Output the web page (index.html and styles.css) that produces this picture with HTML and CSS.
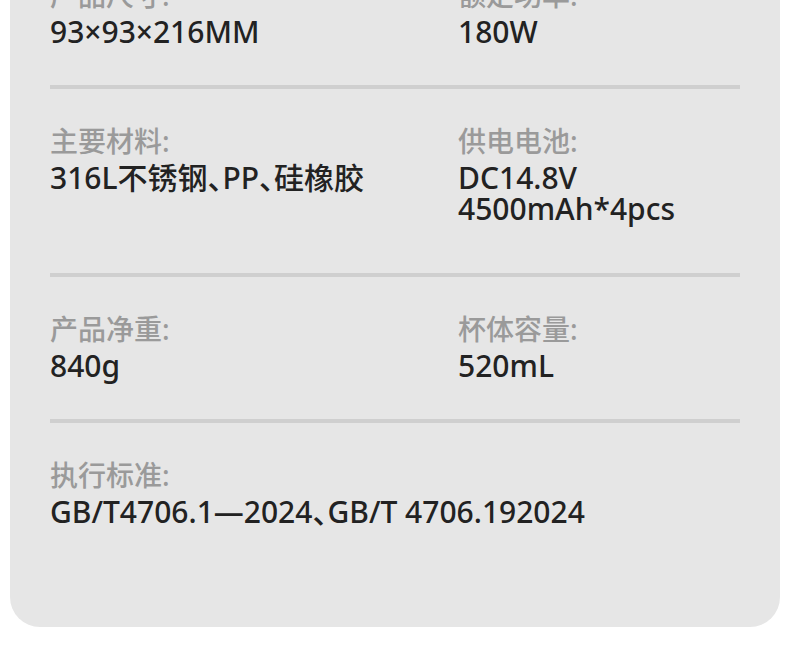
FILE: index.html
```html
<!DOCTYPE html>
<html lang="zh-CN">
<head>
<meta charset="utf-8">
<title>产品参数</title>
<link rel="stylesheet" href="styles.css">
</head>
<body>
<div class="card">
  <div class="row">
    <div class="cell">
      <div class="label">产品尺寸:</div>
      <div class="value">93×93×216MM</div>
    </div>
    <div class="cell">
      <div class="label">额定功率:</div>
      <div class="value">180W</div>
    </div>
  </div>
  <div class="row row-tall">
    <div class="cell">
      <div class="label">主要材料:</div>
      <div class="value">316L不锈钢<span class="pun">、</span>PP<span class="pun">、</span>硅橡胶</div>
    </div>
    <div class="cell">
      <div class="label">供电电池:</div>
      <div class="value">DC14.8V<br>4500mAh*4pcs</div>
    </div>
  </div>
  <div class="row">
    <div class="cell">
      <div class="label">产品净重:</div>
      <div class="value">840g</div>
    </div>
    <div class="cell">
      <div class="label">杯体容量:</div>
      <div class="value">520mL</div>
    </div>
  </div>
  <div class="row row-last">
    <div class="cell cell-wide">
      <div class="label">执行标准:</div>
      <div class="value">GB/T4706.1—2024<span class="pun">、</span>GB/T 4706.192024</div>
    </div>
  </div>
</div>
</body>
</html>
```

FILE: styles.css
```css
html, body {
  margin: 0;
  padding: 0;
  background: #ffffff;
}

body {
  font-family: "Noto Sans", "Noto Sans CJK SC", sans-serif;
  font-weight: 500;
  font-size: 28px;
  line-height: 31px;
}

.card {
  margin: -57px 10px 0;
  background: #e6e6e6;
  border-radius: 0 0 30px 30px;
}

.row {
  margin: 0 40px;
  padding: 42px 0 38px;
  border-bottom: 4px solid #cfcfcf;
  display: grid;
  grid-template-columns: 408px 1fr;
}

.row-tall {
  padding-bottom: 49px;
}

.row-last {
  border-bottom: none;
  padding-bottom: 100px;
}

.cell-wide {
  grid-column: 1 / -1;
}

.label {
  color: #9a9a9a;
  white-space: nowrap;
  margin: -5px 0 5px;
}

.value {
  color: #222222;
  font-size: 30px;
  white-space: nowrap;
}

.pun {
  font-family: "Noto Sans CJK SC", sans-serif;
  font-feature-settings: "halt";
  line-height: 0;
}
```
